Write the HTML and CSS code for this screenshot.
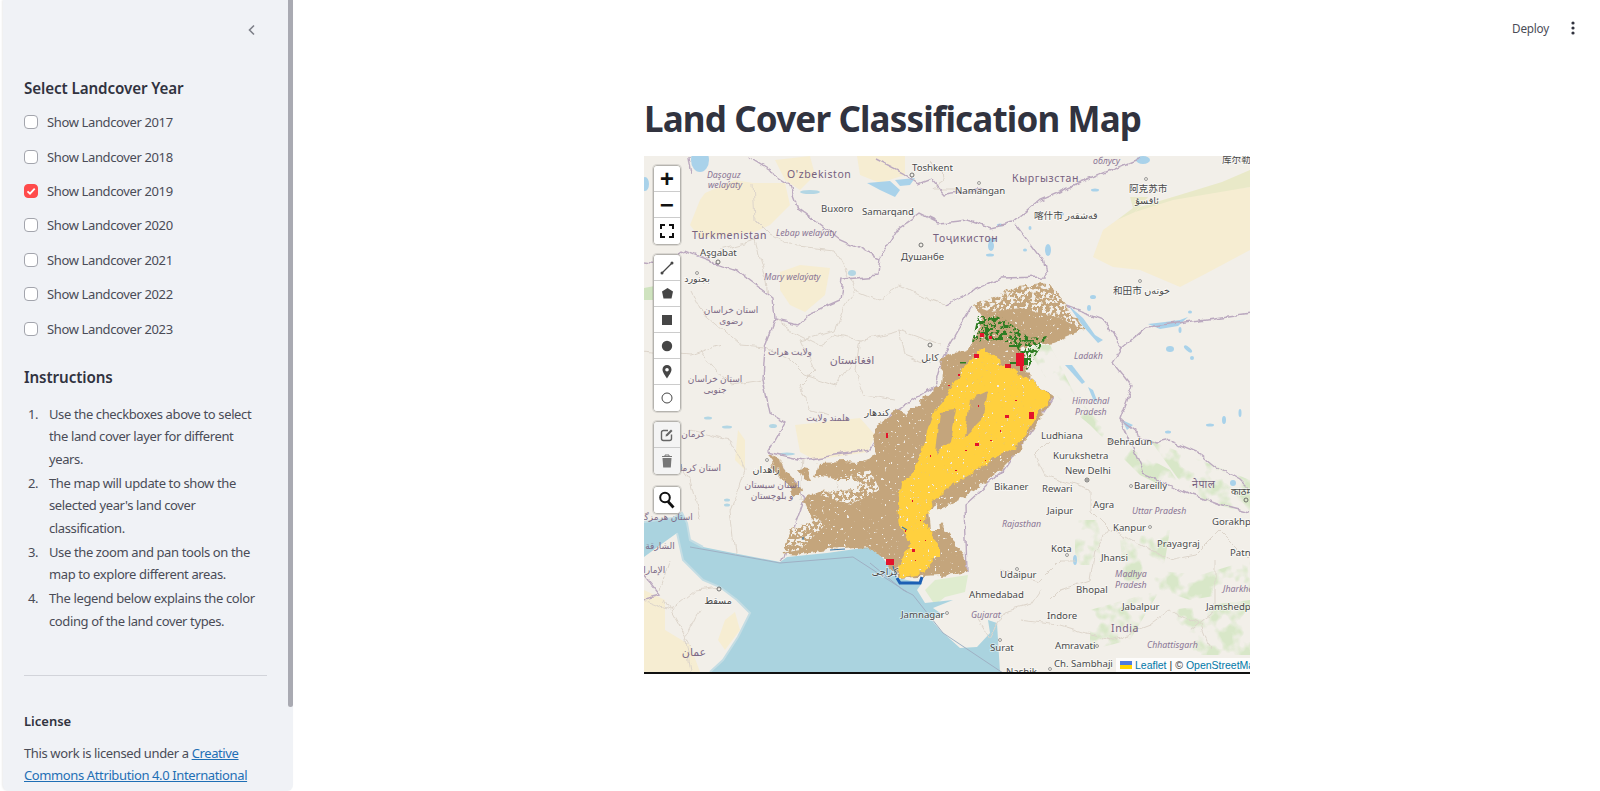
FILE: index.html
```html
<!DOCTYPE html>
<html lang="en">
<head>
  <meta charset="UTF-8">
  <title>Land Cover Classification Map</title>
  <link rel="stylesheet" href="styles.css">
</head>
<body>
  <aside class="sidebar">
    <div class="sidebar-top">
      <svg class="chevron" width="12" height="12" viewBox="0 0 12 12"><path d="M8 1.500 3.500 6 8 10.500" fill="none" stroke="#7d7f88" stroke-width="1.600"/></svg>
    </div>
    <h3 class="side-title">Select Landcover Year</h3>
    <div class="checks">
      <label class="check"><span class="box"></span>Show Landcover 2017</label>
      <label class="check"><span class="box"></span>Show Landcover 2018</label>
      <label class="check"><span class="box on"><svg width="10" height="10" viewBox="0 0 10 10"><path d="M1.500 5.300 4 7.700 8.700 2.700" fill="none" stroke="#fff" stroke-width="1.800"/></svg></span>Show Landcover 2019</label>
      <label class="check"><span class="box"></span>Show Landcover 2020</label>
      <label class="check"><span class="box"></span>Show Landcover 2021</label>
      <label class="check"><span class="box"></span>Show Landcover 2022</label>
      <label class="check"><span class="box"></span>Show Landcover 2023</label>
    </div>
    <h3 class="side-title instructions">Instructions</h3>
    <ol class="steps">
      <li>Use the checkboxes above to select the land cover layer for different years.</li>
      <li>The map will update to show the selected year's land cover classification.</li>
      <li>Use the zoom and pan tools on the map to explore different areas.</li>
      <li>The legend below explains the color coding of the land cover types.</li>
    </ol>
    <hr class="divider">
    <h4 class="license-title">License</h4>
    <p class="license">This work is licensed under a <a href="#">Creative Commons Attribution 4.0 International</a></p>
    <div class="scrollbar"></div>
  </aside>

  <main class="content">
    <header class="toolbar">
      <span class="deploy">Deploy</span>
      <svg class="kebab" width="4" height="14" viewBox="0 0 4 14"><circle cx="2" cy="2" r="1.600"/><circle cx="2" cy="7" r="1.600"/><circle cx="2" cy="12" r="1.600"/></svg>
    </header>
    <div class="block">
      <h1>Land Cover Classification Map</h1>
      <div class="map">
        <svg class="tiles" width="606" height="516" viewBox="644 156 606 516">
          <defs>
            <filter id="wiggle" filterUnits="userSpaceOnUse" x="634" y="146" width="626" height="536" color-interpolation-filters="sRGB">
              <feTurbulence type="fractalNoise" baseFrequency=".07" numOctaves="3" seed="7" result="w"/>
              <feDisplacementMap in="SourceGraphic" in2="w" scale="8" xChannelSelector="R" yChannelSelector="G"/>
            </filter>
            <filter id="tan" filterUnits="userSpaceOnUse" x="644" y="156" width="606" height="516" color-interpolation-filters="sRGB">
              <feTurbulence type="fractalNoise" baseFrequency=".11" numOctaves="3" seed="3" result="w"/>
              <feDisplacementMap in="SourceGraphic" in2="w" scale="9" xChannelSelector="R" yChannelSelector="G" result="d"/>
              <feTurbulence type="fractalNoise" baseFrequency=".32" numOctaves="2" seed="4" result="n"/>
              <feColorMatrix in="n" type="matrix" values="0 0 0 0 0 0 0 0 0 0 0 0 0 0 0 14 0 0 0 -3.100" result="m"/>
              <feComposite in="d" in2="m" operator="in"/>
            </filter>
            <filter id="half" filterUnits="userSpaceOnUse" x="644" y="156" width="606" height="516" color-interpolation-filters="sRGB">
              <feTurbulence type="fractalNoise" baseFrequency=".28" numOctaves="3" seed="9" result="n"/>
              <feColorMatrix in="n" type="matrix" values="0 0 0 0 0 0 0 0 0 0 0 0 0 0 0 14 0 0 0 -7" result="m"/>
              <feComposite in="SourceGraphic" in2="m" operator="in"/>
            </filter>
            <filter id="patch" filterUnits="userSpaceOnUse" x="644" y="156" width="606" height="516" color-interpolation-filters="sRGB">
              <feTurbulence type="fractalNoise" baseFrequency=".05" numOctaves="3" seed="21" result="n"/>
              <feColorMatrix in="n" type="matrix" values="0 0 0 0 0 0 0 0 0 0 0 0 0 0 0 6 0 0 0 -2.800" result="m"/>
              <feComposite in="SourceGraphic" in2="m" operator="in"/>
            </filter>
          </defs>

          <rect x="644" y="156" width="606" height="516" fill="#f2efe9"/>

          <!-- deserts -->
          <g fill="#f6edd2">
            <path d="M700 200 705 193 735 180 753 183 785 183 790 205 770 225 755 232 700 238 690 225Z"/>
            <path d="M775 160 810 156 815 175 800 190 785 180Z"/>
            <path d="M857 156 905 156 905 175 880 183 860 175Z"/>
            <path d="M780 272 800 265 830 268 825 295 805 312 790 305 780 290Z"/>
            <path d="M1093 257 1103 230 1117 220 1140 207 1173 197 1250 187 1250 250 1207 273 1180 287 1140 270 1113 267Z"/>
            <path d="M795 425 860 418 875 435 868 452 815 460 800 452Z"/>
            <path d="M644 590 665 600 665 630 690 645 700 672 644 672Z"/>
            <path d="M725 620 735 612 740 630 725 650 718 640Z"/>
            <path d="M738 430 745 440 745 470 735 460Z"/>
          </g>
          <path d="M1140 207 1173 197 1222 182 1250 170 1250 187 1173 200 1135 212Z" fill="#e9e9c8"/>
          <path d="M1117 220 1133 208 1130 197 1148 197 1135 212Z" fill="#e9e9c8"/>

          <!-- forest -->
          <g fill="#d8e7c8" filter="url(#patch)">
            <path d="M1025 345 1050 345 1075 395 1115 440 1170 470 1190 500 1140 475 1090 425 1060 400Z"/>
            <path d="M1150 570 1200 575 1250 560 1250 590 1190 600 1160 590Z"/>
            <path d="M1090 610 1160 590 1130 640 1090 650Z"/>
            <path d="M1170 610 1250 600 1250 655 1190 655Z"/>
            <path d="M1075 520 1100 520 1100 565 1075 565Z"/>
            <path d="M1150 440 1250 480 1250 515 1190 495Z"/>
            <path d="M1120 540 1170 530 1160 590 1125 590Z"/>
          </g>
          <path d="M925 590 935 580 968 575 965 592 945 597 935 605Z" fill="#dfeccf"/>
          <path d="M644 288 660 285 656 300 644 300Z" fill="#cfe3bf"/>

          <!-- sea -->
          <path d="M644 522 673 518 682 513 687 523 690 540 703 547 733 553 780 562 787 557 827 553 870 547 883 558 897 578 922 583 917 590 925 603 953 600 933 608 943 615 930 618 940 630 960 648 977 647 990 633 988 620 997 623 998 640 1000 672 710 672 723 660 738 637 750 613 737 600 720 587 703 580 683 560 677 533 663 543 644 557Z" fill="#aad3df"/>
          <path d="M644 522 673 518 682 513 687 523 690 540 703 547 M677 533 683 560 703 580 720 587 737 600 750 613 738 637 723 660 710 672" fill="none" stroke="#c4dde4" stroke-width="2"/>

          <!-- lakes -->
          <g fill="#a9d2ea">
            <ellipse cx="700" cy="160" rx="9" ry="12"/>
            <ellipse cx="645" cy="184" rx="4" ry="7"/>
            <path d="M867 183 890 181 900 190 895 197 880 190Z"/>
            <path d="M895 180 915 178 910 185 900 186Z"/>
            <ellipse cx="1143" cy="160" rx="7" ry="4"/>
            <ellipse cx="1048" cy="250" rx="3" ry="6"/>
            <ellipse cx="991" cy="246" rx="3" ry="5"/>
            <ellipse cx="992" cy="240" rx="4" ry="2"/>
            <ellipse cx="1093" cy="297" rx="3" ry="2"/>
            <ellipse cx="1089" cy="308" rx="2" ry="3"/>
            <path d="M1068 305 1083 318 1095 335 1103 340 1098 343 1082 325Z"/>
            <path d="M1148 324 1165 322 1180 320 1188 317 1178 326 1160 329Z"/>
            <ellipse cx="1170" cy="349" rx="4" ry="3"/>
            <ellipse cx="1188" cy="349" rx="5" ry="2" transform="rotate(40 1188 349)"/>
            <ellipse cx="1192" cy="358" rx="2" ry="2"/>
            <path d="M1065 365 1072 365 1085 382 1082 384Z"/>
            <path d="M1088 387 1093 390 1098 403 1093 399Z"/>
            <path d="M1122 420 1133 425 1127 430Z"/>
            <ellipse cx="1168" cy="432" rx="3" ry="1.500"/>
            <ellipse cx="1224" cy="420" rx="2" ry="4"/>
            <ellipse cx="1210" cy="425" rx="4" ry="1.500"/>
            <ellipse cx="1233" cy="483" rx="3" ry="3"/>
            <ellipse cx="1075" cy="560" rx="2" ry="5"/>
            <ellipse cx="1025" cy="250" rx="2" ry="1.500"/>
            <ellipse cx="990" cy="255" rx="4" ry="1.500"/>
            <ellipse cx="1030" cy="228" rx="1.500" ry="2"/>
            <ellipse cx="1062" cy="214" rx="2" ry="1.500"/>
            <ellipse cx="1000" cy="225" rx="3" ry="1.500"/>
            <ellipse cx="1095" cy="190" rx="4" ry="1.500"/>
            <ellipse cx="1180" cy="330" rx="1.500" ry="3"/>
            <ellipse cx="1190" cy="312" rx="2" ry="1.500"/>
            <ellipse cx="1240" cy="413" rx="1.500" ry="4"/>
          </g>
          <g fill="#b3d6e4">
            <ellipse cx="708" cy="418" rx="4" ry="1.500"/>
            <ellipse cx="727" cy="427" rx="5" ry="1.500"/>
            <ellipse cx="773" cy="426" rx="4" ry="2"/>
            <ellipse cx="787" cy="454" rx="8" ry="1.500"/>
            <ellipse cx="727" cy="505" rx="3" ry="1.500"/>
            <ellipse cx="727" cy="500" rx="3" ry="1.500"/>
            <ellipse cx="852" cy="273" rx="4" ry="3"/>
            <ellipse cx="810" cy="192" rx="10" ry="2"/>
          </g>

          <!-- admin lines -->
          <g fill="none" stroke="#ddd5cb" stroke-width="1" filter="url(#wiggle)">
            <path d="M753 183 755 220 770 235 790 245 835 250"/>
            <path d="M835 250 855 290 845 305 835 330 800 340"/>
            <path d="M775 320 800 335 820 345 835 335 860 340 900 330 940 345"/>
            <path d="M855 290 880 300 900 285 930 300 945 305"/>
            <path d="M765 347 790 360 805 375 835 385 850 365"/>
            <path d="M860 340 855 370 865 395 895 400"/>
            <path d="M800 340 815 370 800 385 810 410 830 415"/>
            <path d="M900 330 905 355 930 365"/>
            <path d="M690 290 700 310 740 345 765 347"/>
            <path d="M700 350 730 385 763 380"/>
            <path d="M720 250 755 240 765 275 768 293"/>
            <path d="M644 350 690 355 720 345"/>
            <path d="M690 430 730 440 745 470 730 510 735 553"/>
            <path d="M660 440 690 480 700 520"/>
            <path d="M803 460 800 500M840 460 835 500"/>
            <path d="M1050 440 1035 455 1045 475 1060 480 1090 490 1090 510 1110 530 1095 550 1090 580 1060 590 1050 600"/>
            <path d="M1000 570 1040 580 1060 560 1075 560"/>
            <path d="M1020 620 1060 625 1110 640 1150 625 1170 610 1200 625 1210 650"/>
            <path d="M1110 530 1170 560 1195 555 1220 530 1250 560"/>
            <path d="M1215 560 1215 610 1190 630"/>
            <path d="M644 600 670 610 695 590 720 587M665 600 690 645"/>
            <path d="M670 560 660 590"/>
            <path d="M700 610 685 640 690 672"/>
            <path d="M975 615 990 640 1005 612 1030 605 1040 590"/>
            <path d="M930 160 945 175 935 190 960 190"/>
          </g>

          <!-- country borders -->
          <g fill="none" stroke="#bba9bf" stroke-width="1.400" filter="url(#wiggle)">
            <path d="M747 157 773 173 788 183 797 207 840 240 880 258 878 275 843 278 840 300 810 313 797 325 775 320 773 297 768 293 737 270 717 263 683 250 665 265 644 262"/>
            <path d="M690 156 693 175"/>
            <path d="M775 320 765 347 763 380 770 413 785 422 768 452 783 470 805 497 795 525 782 563"/>
            <path d="M768 452 803 460 870 450 897 410 935 385 943 357 973 305"/>
            <path d="M880 258 897 230 920 213 940 223 967 220 990 228 1013 223 1040 200 1080 183 1140 158"/>
            <path d="M877 160 903 173 917 183 930 178 945 195 985 190"/>
            <path d="M1017 225 1043 260 1047 277 1000 278 973 290 945 305"/>
            <path d="M1067 307 1103 320 1123 347 1113 363 1132 387 1120 420 1147 440 1157 443 1170 440 1200 453 1217 467 1240 480 1250 490"/>
            <path d="M1123 347 1147 327 1200 320 1250 313"/>
            <path d="M1120 420 1143 473 1187 493 1227 507 1250 513"/>
            <path d="M1052 397 1037 420 1003 470 965 505 967 573"/>
            <path d="M644 575 660 595 640 600"/>
          </g>
          <g fill="none" stroke="#9fb0c4" stroke-width="1">
            <path d="M870 563 903 590 913 595 943 633 1003 673"/>
            <path d="M690 547 780 563 853 557 907 592"/>
          </g>

          <!-- land cover -->
          <g fill="#c4a57c" filter="url(#tan)">
            <path d="M873 430 877 455 857 463 845 462 818 463 815 475 835 480 860 480 855 490 820 492 803 500 808 512 815 520 790 530 782 553 797 555 827 550 870 547 887 562 897 577 940 575 967 573 965 557 945 530 940 523 935 510 945 507 960 500 983 483 1003 467 1020 450 1040 420 1052 397 1037 383 1027 373 1023 347 1053 342 1083 330 1067 307 1050 283 1017 287 973 305 983 320 967 350 943 357 940 383 933 390 907 413 897 410Z"/>
            <path d="M768 453 780 460 787 473 803 490 795 495 775 470Z"/>
            <path d="M797 468 808 470 812 480 803 482Z"/>
          </g>
          <path filter="url(#half)" fill="#f2efe9" d="M973 305 1017 287 1050 283 1067 307 1083 330 1060 318 1020 308 990 312Z"/>
          <path filter="url(#half)" fill="#f2efe9" d="M782 553 780 528 815 515 825 525 800 550Z"/>
          <path filter="url(#half)" fill="#f2efe9" d="M838 478 870 470 880 490 850 505 820 495Z"/>
          <path fill="#f2efe9" filter="url(#wiggle)" d="M928 510 937 505 940 530 930 530Z"/>
          <g fill="#ffd03e" filter="url(#tan)">
            <path d="M973 357 983 347 1000 363 1037 383 1050 397 1037 417 1020 443 1003 453 985 465 960 480 940 493 930 505 925 522 938 543 938 557 923 573 897 577 900 563 910 543 900 527 898 503 900 483 915 470 925 440 935 410 948 395 955 380Z"/>
          </g>
          <path fill="#c4a57c" filter="url(#wiggle)" d="M940 412 956 410 950 440 936 455Z"/>
          <path fill="#c4a57c" filter="url(#wiggle)" d="M970 400 988 392 982 420 965 437Z"/>

          <!-- scattered classes -->
          <path filter="url(#half)" fill="#2e7d22" d="M978 316 1000 316 1030 338 1047 336 1026 372 1016 345 995 340 972 342Z"/>
          <g fill="#2e7d22">
            <rect x="1009" y="345" width="10" height="2"/><rect x="995" y="338" width="8" height="2"/><rect x="985" y="327" width="2" height="8"/>
            <rect x="1022" y="340" width="12" height="1.500"/><rect x="1018" y="358" width="10" height="7"/><rect x="1010" y="362" width="6" height="2"/>
            <rect x="990" y="328" width="3" height="2"/><rect x="960" y="362" width="6" height="1.500"/>
          </g>
          <g fill="#e3142c">
            <rect x="1016" y="353" width="8" height="13"/><rect x="1005" y="364" width="6" height="4"/><rect x="974" y="354" width="5" height="4"/>
            <rect x="980" y="333" width="4" height="4"/><rect x="989" y="336" width="3" height="3"/><rect x="1029" y="412" width="5" height="7"/>
            <rect x="1005" y="415" width="4" height="3"/><rect x="975" y="443" width="4" height="3"/><rect x="886" y="559" width="8" height="6"/>
            <rect x="912" y="549" width="3" height="3"/><rect x="886" y="433" width="2" height="5"/><rect x="1020" y="366" width="3" height="5"/>
            <rect x="958" y="374" width="2" height="2"/><rect x="948" y="385" width="2" height="1"/><rect x="930" y="455" width="1" height="2"/>
            <rect x="912" y="500" width="1" height="2"/><rect x="920" y="520" width="1" height="1"/><rect x="905" y="530" width="1" height="2"/>
            <rect x="990" y="440" width="2" height="1"/><rect x="1000" y="430" width="1" height="2"/><rect x="965" y="450" width="2" height="1"/>
            <rect x="955" y="470" width="2" height="1"/><rect x="978" y="405" width="1" height="2"/><rect x="1015" y="400" width="2" height="1"/>
            <rect x="985" y="460" width="1" height="1"/><rect x="925" y="540" width="1" height="1"/><rect x="915" y="560" width="1" height="1"/>
          </g>
          <path d="M897 578 900 583 920 583 922 577" fill="none" stroke="#1c5fb4" stroke-width="3"/>
          <path d="M893 566 896 577M830 550 845 549M902 527 907 530M803 537 803 540" fill="none" stroke="#3f78a8" stroke-width="1.200"/>

          <!-- labels -->
          <g class="tx it">
            <text x="707" y="178">Daşoguz</text>
            <text x="708" y="188">welaýaty</text>
            <text x="776" y="236">Lebap welaýaty</text>
            <text x="764" y="280">Mary welaýaty</text>
            <text x="1093" y="164">облусу</text>
            <text x="1074" y="359">Ladakh</text>
            <text x="1072" y="404">Himachal</text>
            <text x="1075" y="415">Pradesh</text>
            <text x="1132" y="514">Uttar Pradesh</text>
            <text x="1002" y="527">Rajasthan</text>
            <text x="1115" y="577">Madhya</text>
            <text x="1115" y="588">Pradesh</text>
            <text x="1223" y="592">Jharkhand</text>
            <text x="971" y="618">Gujarat</text>
            <text x="1147" y="648">Chhattisgarh</text>
          </g>
          <g class="tx country">
            <text x="787" y="178">O'zbekiston</text>
            <text x="692" y="239">Türkmenistan</text>
            <text x="933" y="242">Тоҷикистон</text>
            <text x="1012" y="182">Кыргызстан</text>
            <text x="1111" y="632">India</text>
            <text x="1192" y="488">नेपाल</text>
          </g>
          <g class="tx city">
            <text x="912" y="171">Toshkent</text>
            <text x="821" y="212">Buxoro</text>
            <text x="862" y="215">Samarqand</text>
            <text x="700" y="256">Aşgabat</text>
            <text x="901" y="260">Душанбе</text>
            <text x="955" y="194">Namangan</text>
            <text x="901" y="618">Jamnagar</text>
            <text x="1041" y="439">Ludhiana</text>
            <text x="1107" y="445">Dehradun</text>
            <text x="1053" y="459">Kurukshetra</text>
            <text x="1065" y="474">New Delhi</text>
            <text x="994" y="490">Bikaner</text>
            <text x="1042" y="492">Rewari</text>
            <text x="1134" y="489">Bareilly</text>
            <text x="1231" y="495">काठमा</text>
            <text x="1047" y="514">Jaipur</text>
            <text x="1093" y="508">Agra</text>
            <text x="1113" y="531">Kanpur</text>
            <text x="1212" y="525">Gorakhpur</text>
            <text x="1157" y="547">Prayagraj</text>
            <text x="1051" y="552">Kota</text>
            <text x="1101" y="561">Jhansi</text>
            <text x="1230" y="556">Patna</text>
            <text x="1000" y="578">Udaipur</text>
            <text x="969" y="598">Ahmedabad</text>
            <text x="1076" y="593">Bhopal</text>
            <text x="1122" y="610">Jabalpur</text>
            <text x="1206" y="610">Jamshedpur</text>
            <text x="1047" y="619">Indore</text>
            <text x="990" y="651">Surat</text>
            <text x="1055" y="649">Amravati</text>
            <text x="1054" y="667">Ch. Sambhaji</text>
            <text x="1006" y="675">Nashik</text>
            <text x="1222" y="163">库尔勒</text>
            <text x="1129" y="192">阿克苏市</text>
            <text x="1034" y="219">喀什市 قەشقەر</text>
            <text x="1113" y="294">和田市 خوتەن</text>
            <text class="mid" x="1147" y="204">ئاقسۇ</text>
            <text class="mid" x="697" y="282">بجنورد</text>
            <text class="mid" x="930" y="361">کابل</text>
            <text class="mid" x="877" y="416">کندهار</text>
            <text class="mid" x="766" y="473">زاهدان</text>
            <text class="mid" x="885" y="575">کراچی</text>
            <text class="mid" x="718" y="604">مسقط</text>
          </g>
          <g class="tx fa">
            <text x="731" y="313">استان خراسان</text>
            <text x="731" y="324">رضوی</text>
            <text x="790" y="355">ولایت هرات</text>
            <text class="wide" x="852" y="364">افغانستان</text>
            <text x="715" y="382">استان خراسان</text>
            <text x="715" y="393">جنوبی</text>
            <text x="828" y="421">هلمند ولایت</text>
            <text x="693" y="437">کرمان</text>
            <text x="697" y="471">استان کرمان</text>
            <text x="772" y="488">استان سیستان</text>
            <text x="772" y="499">و بلوچستان</text>
            <text x="664" y="520">استان هرمزگان</text>
            <text x="660" y="549">الشارقة</text>
            <text x="650" y="573">الإمارات</text>
            <text class="wide" x="694" y="656">عمان</text>
          </g>
          <g fill="none" stroke="#555" stroke-width=".8">
            <circle cx="912" cy="175" r="2"/><circle cx="718" cy="262" r="2"/><circle cx="921" cy="245" r="2"/><circle cx="930" cy="345" r="2"/><circle cx="1087" cy="480" r="2"/><circle cx="1087" cy="480" r=".5"/><circle cx="719" cy="589" r="2"/><circle cx="1246" cy="500" r="2"/>
            <g stroke="#888"><circle cx="979" cy="183" r="1.500"/><circle cx="1146" cy="179" r="1.500"/><circle cx="1140" cy="281" r="1.500"/><circle cx="697" cy="273" r="1.500"/><circle cx="767" cy="460" r="1.500"/><circle cx="947" cy="613" r="1.500"/><circle cx="1110" cy="441" r="1.500"/><circle cx="1131" cy="486" r="1.500"/><circle cx="1150" cy="527" r="1.500"/><circle cx="1067" cy="555" r="1.500"/><circle cx="1017" cy="569" r="1.500"/><circle cx="1000" cy="640" r="1.500"/><circle cx="1097" cy="646" r="1.500"/><circle cx="1050" cy="669" r="1.500"/></g>
          </g>
        </svg>

        <div class="controls">
          <div class="ctrl-group">
            <div class="ctrl big">+</div>
            <div class="ctrl big">−</div>
            <div class="ctrl">
              <svg width="14" height="14" viewBox="0 0 14 14"><path d="M1 5V1H5M9 1H13V5M13 9V13H9M5 13H1V9" fill="none" stroke="#111" stroke-width="2"/></svg>
            </div>
          </div>
          <div class="ctrl-group">
            <div class="ctrl">
              <svg width="14" height="14" viewBox="0 0 14 14"><path d="M2 12 12 2" stroke="#464646" stroke-width="1.200"/><circle cx="2" cy="12" r="1.500" fill="#464646"/><circle cx="12" cy="2" r="1.500" fill="#464646"/></svg>
            </div>
            <div class="ctrl">
              <svg width="13" height="13" viewBox="0 0 13 13"><path d="M6.500 1 12 4.500 10.500 11.500H2.500L1 4.500Z" fill="#464646"/></svg>
            </div>
            <div class="ctrl">
              <svg width="12" height="12" viewBox="0 0 12 12"><rect x="1" y="1" width="10" height="10" fill="#464646"/></svg>
            </div>
            <div class="ctrl">
              <svg width="12" height="12" viewBox="0 0 12 12"><circle cx="6" cy="6" r="5.200" fill="#464646"/></svg>
            </div>
            <div class="ctrl">
              <svg width="10" height="14" viewBox="0 0 10 14"><path fill-rule="evenodd" d="M5 0a4.500 4.500 0 0 1 4.500 4.500C9.500 7.500 6.500 11 5 13.500 3.500 11 .5 7.500 .5 4.500A4.500 4.500 0 0 1 5 0ZM5 3a1.800 1.800 0 1 0 0 3.600A1.800 1.800 0 0 0 5 3Z" fill="#464646"/></svg>
            </div>
            <div class="ctrl">
              <svg width="12" height="12" viewBox="0 0 12 12"><circle cx="6" cy="6" r="5" fill="#fff" stroke="#464646" stroke-width="1"/></svg>
            </div>
          </div>
          <div class="ctrl-group off">
            <div class="ctrl">
              <svg width="14" height="14" viewBox="0 0 14 14"><path d="M8 2.500H3.500A2 2 0 0 0 1.500 4.500V10.500A2 2 0 0 0 3.500 12.500H9.500A2 2 0 0 0 11.500 10.500V6.500" fill="none" stroke="#666" stroke-width="1.400"/><path d="M5.500 8.500 6 6.500 11 1.500 12.500 3 7.500 8Z" fill="#666"/></svg>
            </div>
            <div class="ctrl">
              <svg width="12" height="14" viewBox="0 0 12 14"><path d="M1 2.500H11M4 2.500V1H8V2.500" fill="none" stroke="#777" stroke-width="1"/><path d="M1.500 4H10.500L9.800 13.500H2.200Z" fill="#777"/></svg>
            </div>
          </div>
          <div class="ctrl-group search">
            <div class="ctrl">
              <svg width="18" height="18" viewBox="0 0 18 18"><circle cx="7" cy="6.500" r="4.800" fill="none" stroke="#111" stroke-width="2"/><path d="M10 10.500 15.500 16.500" stroke="#111" stroke-width="2.800"/></svg>
            </div>
          </div>
        </div>

        <div class="attribution">
          <svg width="12" height="8" viewBox="0 0 12 8"><rect width="12" height="4" fill="#4c7be1"/><rect y="4" width="12" height="4" fill="#ffd500"/></svg>
          <a href="#">Leaflet</a> | © <a href="#">OpenStreetMap</a> contributors
        </div>
      </div>
      <div class="map-rule"></div>
    </div>
  </main>
</body>
</html>
```
FILE: styles.css
```css
* {
  box-sizing: border-box;
}
html, body {
  margin: 0;
  height: 791px;
  overflow: hidden;
}
body {
  display: flex;
  background-color: #fff;
  color: #31333f;
  font-family: "Noto Sans", sans-serif;
}

/* sidebar */
.sidebar {
  position: relative;
  width: 290px;
  height: 791px;
  margin-left: 3px;
  padding: 0 26px 0 21px;
  background-color: #f0f2f6;
  border-radius: 0 0 6px 6px;
  box-shadow: -1px 0 2px rgba(0, 0, 0, .08);
  overflow: hidden;
  flex-shrink: 0;
}
.sidebar-top {
  display: flex;
  justify-content: flex-end;
  height: 78px;
  padding: 24px 9px 0 0;
}
.side-title {
  margin: 0;
  font-size: 15.200px;
  font-weight: 600;
  line-height: 20px;
  letter-spacing: -.1px;
}
.checks {
  display: flex;
  flex-direction: column;
  margin-top: 7px;
}
.check {
  display: flex;
  align-items: center;
  height: 34.400px;
  font-size: 13px;
  color: #4a4c57;
  letter-spacing: -.37px;
}
.box {
  display: flex;
  align-items: center;
  justify-content: center;
  width: 14px;
  height: 14px;
  margin-right: 9px;
  background-color: #fff;
  border: 1px solid #a3a5ad;
  border-radius: 4px;
}
.box.on {
  background-color: #ff4b4b;
  border-color: #ff4b4b;
}
.instructions {
  margin-top: 21px;
}
.steps {
  margin: 16px 0 0;
  padding: 0;
  list-style: none;
  counter-reset: step;
  font-size: 13px;
  line-height: 22.400px;
  color: #4a4c57;
  letter-spacing: -.38px;
}
.steps li {
  position: relative;
  margin-bottom: 1.800px;
  padding-left: 25px;
  counter-increment: step;
}
.steps li::before {
  content: counter(step) ".";
  position: absolute;
  left: 4px;
}
.divider {
  height: 1px;
  margin: 43px 0 0;
  background-color: #d2d4da;
  border: 0;
}
.license-title {
  margin: 35px 0 0;
  font-size: 13px;
  font-weight: 600;
  line-height: 20px;
}
.license {
  margin: 12px 0 0;
  font-size: 13px;
  line-height: 21.500px;
  color: #4a4c57;
  letter-spacing: -.38px;
}
.license a {
  color: #1f6fb5;
}
.scrollbar {
  position: absolute;
  top: 0;
  right: 0;
  width: 5px;
  height: 707px;
  background-color: #a9aab2;
  border-radius: 0 0 3px 3px;
}

/* main area */
.content {
  flex: 1;
  min-width: 0;
  position: relative;
}
.toolbar {
  position: absolute;
  top: 0;
  right: 0;
  display: flex;
  align-items: center;
  height: 56px;
  padding-right: 25px;
}
.deploy {
  margin-right: 22px;
  font-size: 11.700px;
  color: #4a4c57;
  letter-spacing: -.2px;
}
.kebab {
  fill: #31333f;
}
.block {
  width: 606px;
  margin: 90px 0 0 351px;
}
h1 {
  margin: 0;
  height: 66px;
  font-size: 35px;
  font-weight: 700;
  line-height: 58px;
  letter-spacing: -.85px;
  white-space: nowrap;
}

/* map */
.map {
  position: relative;
  width: 606px;
  height: 516px;
  overflow: hidden;
  background-color: #f2efe9;
}
.map-rule {
  height: 2px;
  background-color: #111;
}
.tiles {
  display: block;
}
.tx text {
  font-family: "Noto Sans", "DejaVu Sans", "Noto Sans CJK SC", sans-serif;
}
.it text {
  font-size: 8.800px;
  font-style: italic;
  fill: #8a7595;
}
.country text {
  font-size: 10.500px;
  letter-spacing: .6px;
  fill: #76617f;
}
.city text {
  font-size: 9.600px;
  fill: #4a4a4a;
  paint-order: stroke;
  stroke: rgba(255, 255, 255, .6);
  stroke-width: 1.500px;
}
.city .mid {
  text-anchor: middle;
}
.fa text {
  font-size: 9px;
  fill: #7d6a86;
  text-anchor: middle;
}
.fa .wide {
  font-size: 11px;
}
.controls {
  position: absolute;
  top: 9px;
  left: 9px;
  display: flex;
  flex-direction: column;
  gap: 9px;
}
.ctrl-group {
  display: flex;
  flex-direction: column;
  width: 28px;
  background-clip: padding-box;
  border: 1px solid #b5b3ae;
  border-radius: 4px;
  box-shadow: 0 0 0 1px rgba(0, 0, 0, .1);
  overflow: hidden;
}
.search {
  margin-top: 2px;
}
.ctrl {
  display: flex;
  align-items: center;
  justify-content: center;
  height: 26px;
  background-color: #fff;
  border-bottom: 1px solid #ccc;
  color: #111;
}
.ctrl:last-child {
  height: 26px;
  border-bottom: 0;
}
.big {
  padding-top: 3px;
  font-family: "Liberation Mono", monospace;
  font-size: 24px;
  font-weight: 700;
  line-height: 23px;
}
.off .ctrl {
  background-color: #f4f4f4;
}
.attribution {
  position: absolute;
  left: 472px;
  bottom: 0;
  display: flex;
  align-items: center;
  gap: 3px;
  height: 14px;
  padding-left: 4px;
  width: 240px;
  background-color: rgba(255, 255, 255, .8);
  font-family: "Liberation Sans", sans-serif;
  font-size: 10.500px;
  color: #333;
  white-space: nowrap;
}
.attribution a {
  color: #0078a8;
  text-decoration: none;
}
```
